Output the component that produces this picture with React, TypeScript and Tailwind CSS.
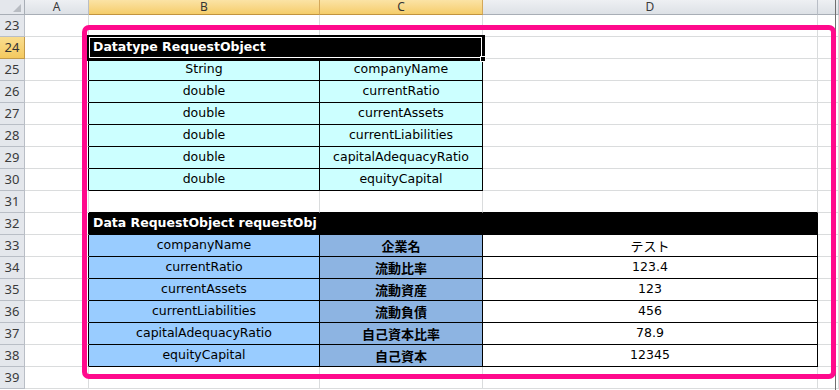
import React from "react";

const cols = ["A", "B", "C", "D", ""];

const typeRows = [
  ["String", "companyName"],
  ["double", "currentRatio"],
  ["double", "currentAssets"],
  ["double", "currentLiabilities"],
  ["double", "capitalAdequacyRatio"],
  ["double", "equityCapital"],
];

const dataRows = [
  ["companyName", "企業名", "テスト"],
  ["currentRatio", "流動比率", "123.4"],
  ["currentAssets", "流動資産", "123"],
  ["currentLiabilities", "流動負債", "456"],
  ["capitalAdequacyRatio", "自己資本比率", "78.9"],
  ["equityCapital", "自己資本", "12345"],
];

const cellFont = "font-['DejaVu_Sans','Noto_Sans_CJK_JP',sans-serif] text-[12.5px] text-black";
const jpFont = "font-['Noto_Sans_CJK_JP',sans-serif] text-[13px] font-bold text-black";

const RowHead = ({ n, active }: { n: number; active?: boolean }) => (
  <div
    className={`flex items-center justify-center border-r border-b font-['Noto_Sans',sans-serif] text-[13px] ${
      active
        ? "bg-gradient-to-b from-[#f9dd8e] to-[#f4c95f] border-[#c29a4a] text-[#333]"
        : "bg-[#e4e7ec] border-[#b9bec6] text-[#3a3a3a]"
    }`}
  >
    {n}
  </div>
);

// blank grid cell
const G = ({ black = "" }: { black?: string }) => (
  <div className={`border-r border-b border-[#dadcdd] ${black}`} />
);

export default function App() {
  return (
    <div className="relative w-[839px] h-[390px] overflow-hidden bg-white">
      <div className="grid grid-cols-[25px_64px_231px_163px_335px_21px] grid-rows-[15px_repeat(17,22px)]">
        {/* column headers */}
        <div className="relative bg-[#e4e7ec] border-r border-b border-[#a8aeb6]">
          <div className="absolute right-[3px] bottom-[2px] w-0 h-0 border-l-[8px] border-l-transparent border-b-[8px] border-b-[#b8bcc2]" />
        </div>
        {cols.map((c, i) => {
          const sel = c === "B" || c === "C";
          return (
            <div
              key={i}
              className={`flex items-center justify-center border-r border-b font-['Noto_Sans',sans-serif] text-[12px] leading-[12px] ${
                sel
                  ? "bg-gradient-to-b from-[#fbe3a5] to-[#f5cd6a] border-r-[#d4a85a] border-b-[#c2943f] text-[#333]"
                  : "bg-gradient-to-b from-[#eef0f3] to-[#dde1e6] border-r-[#b9bec6] border-b-[#a8aeb6] text-[#3a3a3a]"
              }`}
            >
              {c}
            </div>
          );
        })}

        {/* row 23 */}
        <RowHead n={23} />
        <G />
        <G />
        <G />
        <G />
        <G />

        {/* row 24 - selected header */}
        <RowHead n={24} active />
        <G />
        <div className="relative col-span-2 bg-black border-r border-b border-black outline-2 outline-black flex items-center px-[4px] shadow-[inset_0_0_0_1px_white]">
          <span className="font-['DejaVu_Sans',sans-serif] text-[12.5px] font-bold text-white">Datatype RequestObject</span>
          <div className="absolute -right-[4px] -bottom-[4px] w-[6px] h-[6px] bg-black border border-white" />
        </div>
        <G />
        <G />

        {/* rows 25-30 */}
        {typeRows.map(([t, n], i) => (
          <React.Fragment key={n}>
            <RowHead n={25 + i} />
            <G black="!border-r-black" />
            <div className={`flex items-center justify-center bg-[#ccffff] border-r border-b border-black ${cellFont}`}>{t}</div>
            <div className={`flex items-center justify-center bg-[#ccffff] border-r border-b border-black ${cellFont}`}>{n}</div>
            <G />
            <G />
          </React.Fragment>
        ))}

        {/* row 31 */}
        <RowHead n={31} />
        <G />
        <G black="!border-b-black" />
        <G black="!border-b-black" />
        <G black="!border-b-black" />
        <G />

        {/* row 32 */}
        <RowHead n={32} />
        <G black="!border-r-black" />
        <div className="col-span-3 bg-black border-r border-b border-black flex items-center px-[4px]">
          <span className="font-['DejaVu_Sans',sans-serif] text-[12.5px] font-bold text-white">Data RequestObject requestObj</span>
        </div>
        <G />

        {/* rows 33-38 */}
        {dataRows.map(([n, jp, v], i) => (
          <React.Fragment key={n}>
            <RowHead n={33 + i} />
            <G black="!border-r-black" />
            <div className={`flex items-center justify-center bg-[#99ccff] border-r border-b border-black ${cellFont}`}>{n}</div>
            <div className={`flex items-center justify-center bg-[#8db4e2] border-r border-b border-black ${jpFont}`}>{jp}</div>
            <div className={`flex items-center justify-center bg-white border-r border-b border-black ${cellFont} ${i === 0 ? "text-[13px] font-['Noto_Sans_CJK_JP',sans-serif]" : ""}`}>{v}</div>
            <G />
          </React.Fragment>
        ))}

        {/* row 39 */}
        <RowHead n={39} />
        <G />
        <G />
        <G />
        <G />
        <G />
      </div>

      {/* window edge */}
      <div className="absolute top-0 left-[835px] w-[1px] h-full bg-[#6f6f6f]" />

      {/* highlight frame */}
      <div className="absolute left-[82px] top-[25px] w-[754px] h-[354px] border-[5px] border-[#ff0a8c] rounded-[7px] pointer-events-none" />
    </div>
  );
}
